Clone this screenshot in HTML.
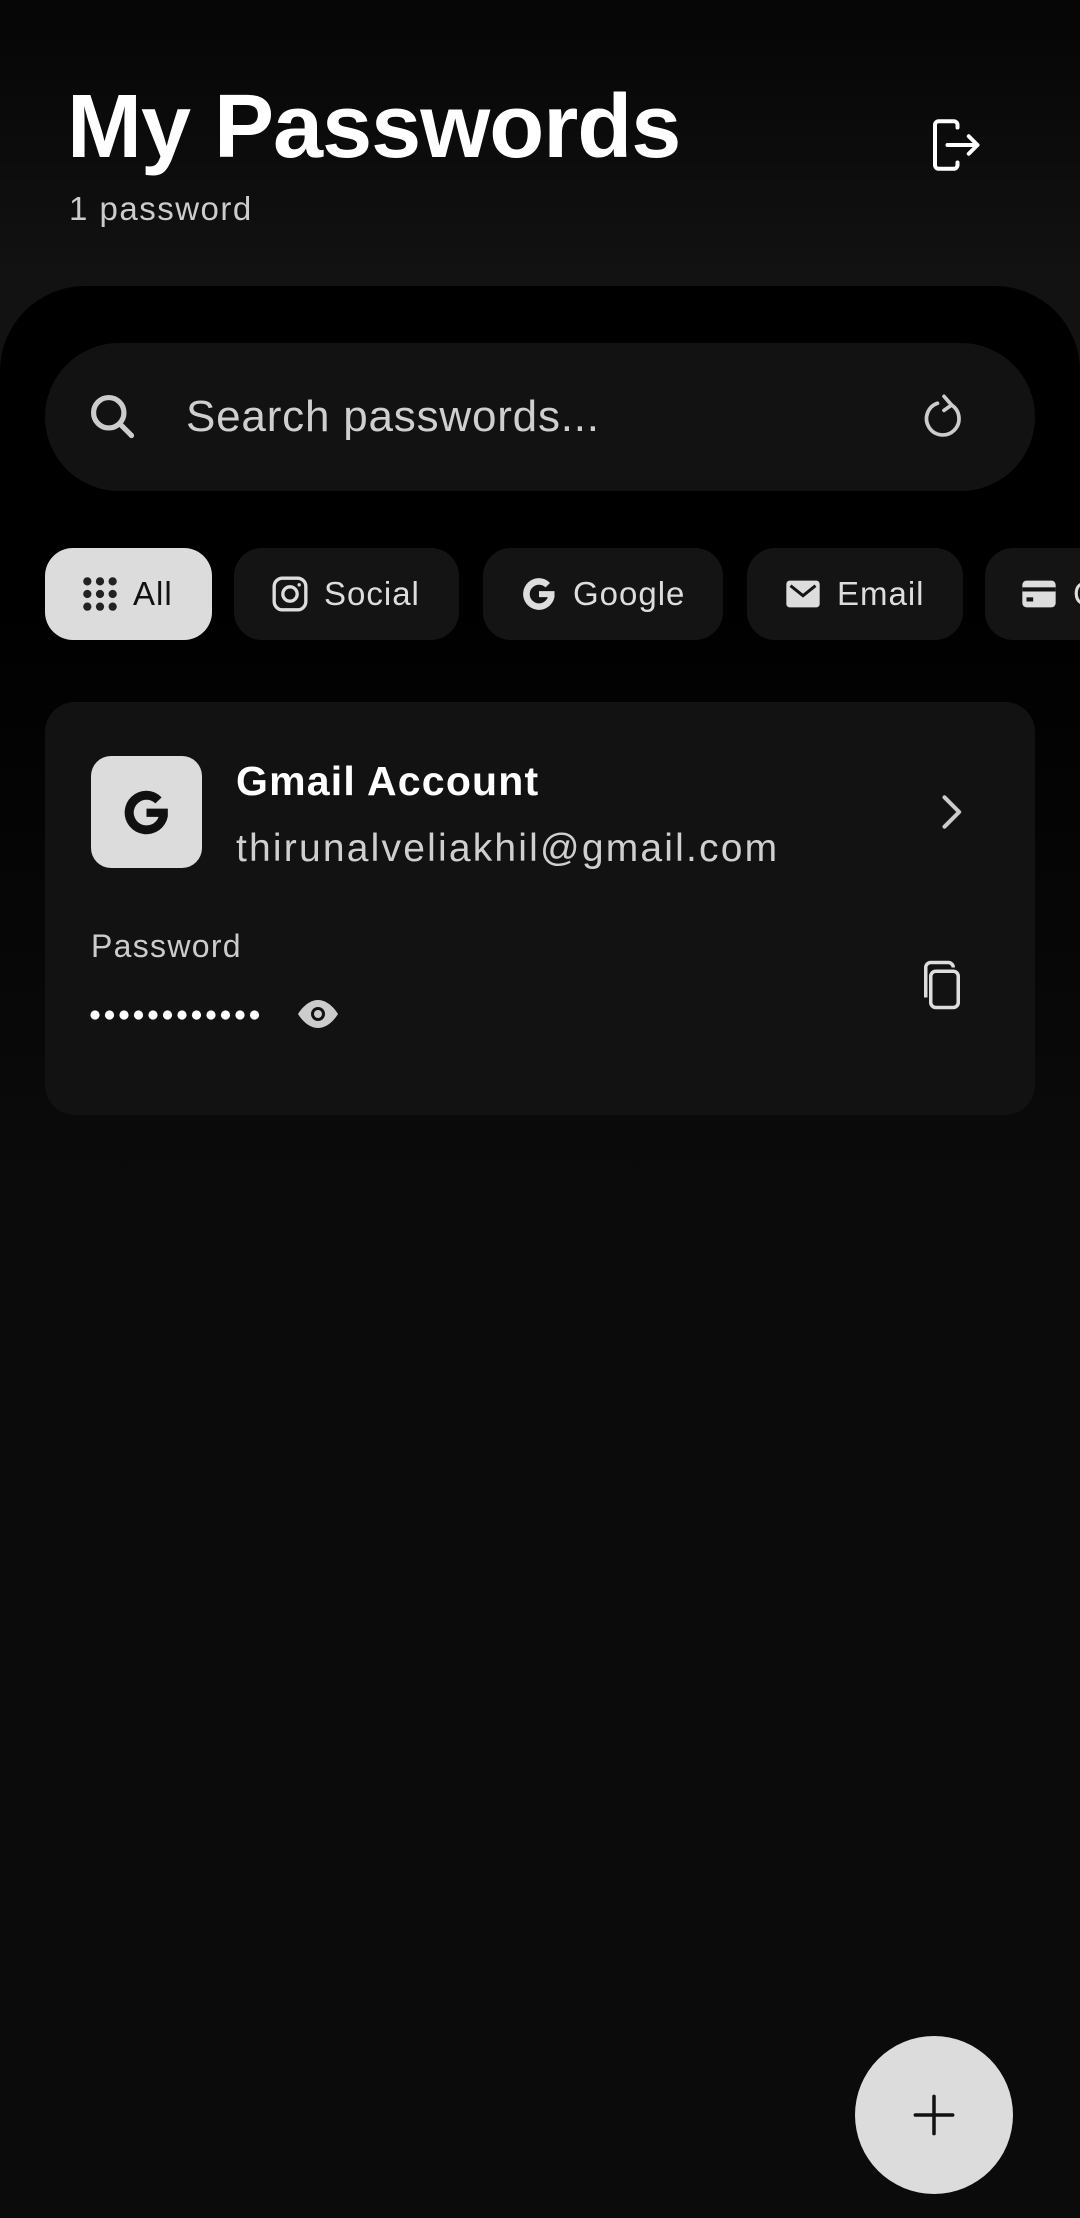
<!DOCTYPE html>
<html><head><meta charset="utf-8"><style>
*{margin:0;padding:0;box-sizing:border-box}
html,body{width:1080px;height:2218px;overflow:hidden}
body{background:#0b0b0b;font-family:"Liberation Sans",sans-serif;position:relative;color:#fff}
.wrap{position:absolute;left:0;top:0;width:1080px;height:2218px;overflow:hidden}
.top{position:absolute;left:0;top:0;width:1080px;height:400px;background:linear-gradient(#050505,#121212 280px)}
.panel{position:absolute;left:0;top:286px;width:1080px;height:1932px;border-radius:85px 85px 0 0;background:linear-gradient(#000 0,#000 300px,#0b0b0b 900px)}
.a{position:absolute}
h1{position:absolute;left:67px;top:76px;font-size:90px;font-weight:bold;letter-spacing:-1px}
.sub{left:69px;top:190px;font-size:33px;color:#ccc;letter-spacing:1.5px}
.search{left:45px;top:343px;width:990px;height:148px;border-radius:74px;background:#121212}
.ph{left:186px;top:392px;font-size:44px;color:#cfcfcf;letter-spacing:0.8px}
.chip{top:548px;height:92px;border-radius:28px;background:#141414;font-size:33px;color:#ddd;display:flex;align-items:center;padding-left:36px;gap:14px;letter-spacing:1px;white-space:nowrap}
.chip svg{flex-shrink:0}
.card{left:45px;top:702px;width:990px;height:413px;border-radius:30px;background:#121212}
</style></head><body><div class="wrap">
<div class="top"></div>
<div class="panel"></div>
<h1>My Passwords</h1>
<div class="a sub">1 password</div>
<svg class="a" style="left:925px;top:115px" width="60" height="60" viewBox="0 0 24 24" fill="none" stroke="#fff" stroke-width="1.6" stroke-linecap="round" stroke-linejoin="round"><path d="M13 5V4a1.5 1.5 0 0 0-1.5-1.5h-6A1.5 1.5 0 0 0 4 4v16a1.5 1.5 0 0 0 1.5 1.5h6A1.5 1.5 0 0 0 13 20v-1"/><path d="M9 12h12M17.5 8.5 21 12l-3.5 3.5"/></svg>
<div class="a search"></div>
<svg class="a" style="left:86px;top:390px" width="52" height="52" viewBox="0 0 24 24" fill="none" stroke="#ccc" stroke-width="2.4" stroke-linecap="round"><circle cx="10.5" cy="10.5" r="7"/><path d="M15.5 15.5 21 21"/></svg>
<div class="a ph">Search passwords...</div>
<svg class="a" style="left:918px;top:392px" width="52" height="52" viewBox="0 0 24 24" fill="none" stroke="#ccc" stroke-width="1.7" stroke-linecap="round" stroke-linejoin="round"><path d="M15.5 6A7.5 7.5 0 1 1 9 5.2"/><path d="M12 2l3.5 4-3.5 2.5"/></svg>
<div class="a chip" style="left:45px;width:167px;background:#dcdcdc;color:#111;padding-left:36px">
<svg width="38" height="38" viewBox="0 0 24 24" fill="#222"><circle cx="4" cy="4" r="2.6"/><circle cx="12" cy="4" r="2.6"/><circle cx="20" cy="4" r="2.6"/><circle cx="4" cy="12" r="2.6"/><circle cx="12" cy="12" r="2.6"/><circle cx="20" cy="12" r="2.6"/><circle cx="4" cy="20" r="2.6"/><circle cx="12" cy="20" r="2.6"/><circle cx="20" cy="20" r="2.6"/></svg>All</div>
<div class="a chip" style="left:234px;width:225px">
<svg width="40" height="40" viewBox="0 0 24 24" fill="none" stroke="#ddd" stroke-width="2"><rect x="2.5" y="2.5" width="19" height="19" rx="5"/><circle cx="12" cy="12" r="4.3"/><circle cx="17.5" cy="6.5" r="1" fill="#ddd" stroke="none"/></svg>Social</div>
<div class="a chip" style="left:483px;width:240px">
<svg width="40" height="40" viewBox="0 0 24 24"><path fill="#ddd" d="M12 2.5a9.5 9.5 0 1 0 9.3 11.2v-3.4H12v3.6h5.3A5.6 5.6 0 1 1 15.9 8l2.7-2.6A9.4 9.4 0 0 0 12 2.5z"/></svg>Google</div>
<div class="a chip" style="left:747px;width:216px">
<svg width="40" height="40" viewBox="0 0 24 24"><rect x="2" y="4" width="20" height="16" rx="2" fill="#ddd"/><path d="M4.5 7 12 13l7.5-6" fill="none" stroke="#141414" stroke-width="1.8"/></svg>Email</div>
<div class="a chip" style="left:985px;width:210px;padding-left:34px">
<svg width="40" height="40" viewBox="0 0 24 24"><rect x="2" y="4" width="20" height="16" rx="2.5" fill="#ddd"/><rect x="2" y="8" width="20" height="2.5" fill="#141414"/><rect x="4.5" y="14" width="4" height="2.5" fill="#141414"/></svg>Cards</div>
<div class="a card"></div>
<div class="a" style="left:91px;top:756px;width:111px;height:112px;border-radius:20px;background:#dcdcdc"></div>
<svg class="a" style="left:119px;top:785px" width="55" height="55" viewBox="0 0 24 24"><path fill="#111" d="M12 2.5a9.5 9.5 0 1 0 9.3 11.2v-3.4H12v3.6h5.3A5.6 5.6 0 1 1 15.9 8l2.7-2.6A9.4 9.4 0 0 0 12 2.5z"/></svg>
<div class="a" style="left:236px;top:758px;font-size:41px;font-weight:bold;letter-spacing:1.2px">Gmail Account</div>
<div class="a" style="left:236px;top:827px;font-size:39px;color:#cfcfcf;letter-spacing:2.2px">thirunalveliakhil@gmail.com</div>
<svg class="a" style="left:928px;top:790px" width="44" height="44" viewBox="0 0 24 24" fill="none" stroke="#ccc" stroke-width="2.2" stroke-linecap="round" stroke-linejoin="round"><path d="M9 4l8 8-8 8"/></svg>
<div class="a" style="left:91px;top:928px;font-size:32px;color:#ccc;letter-spacing:1.3px">Password</div>
<svg class="a" style="left:88px;top:1005px" width="180" height="20"><g fill="#fff">
<circle cx="7" cy="10" r="4.6"/><circle cx="21.5" cy="10" r="4.6"/><circle cx="36" cy="10" r="4.6"/><circle cx="50.5" cy="10" r="4.6"/><circle cx="65" cy="10" r="4.6"/><circle cx="79.5" cy="10" r="4.6"/><circle cx="94" cy="10" r="4.6"/><circle cx="108.5" cy="10" r="4.6"/><circle cx="123" cy="10" r="4.6"/><circle cx="137.5" cy="10" r="4.6"/><circle cx="152" cy="10" r="4.6"/><circle cx="166.5" cy="10" r="4.6"/></g></svg>
<svg class="a" style="left:294px;top:990px" width="48" height="48" viewBox="0 0 24 24"><path fill="#ccc" d="M12 5C6 5 2 12 2 12s4 7 10 7 10-7 10-7-4-7-10-7z"/><circle cx="12" cy="12" r="3.5" fill="#121212"/><circle cx="12" cy="12" r="2" fill="#ccc"/></svg>
<svg class="a" style="left:912px;top:955px" width="60" height="60" viewBox="0 0 24 24" fill="none" stroke="#ddd" stroke-width="1.4"><rect x="7.5" y="6.5" width="11" height="14.5" rx="2"/><path d="M5.5 17V5a2 2 0 0 1 2-2h7a2 2 0 0 1 2 2"/></svg>
<div class="a" style="left:855px;top:2036px;width:158px;height:158px;border-radius:50%;background:#dcdcdc"></div>
<svg class="a" style="left:906px;top:2087px" width="56" height="56" viewBox="0 0 24 24" stroke="#111" stroke-width="1.5" stroke-linecap="round"><path d="M12 4v16M4 12h16"/></svg>
</div></body></html>
